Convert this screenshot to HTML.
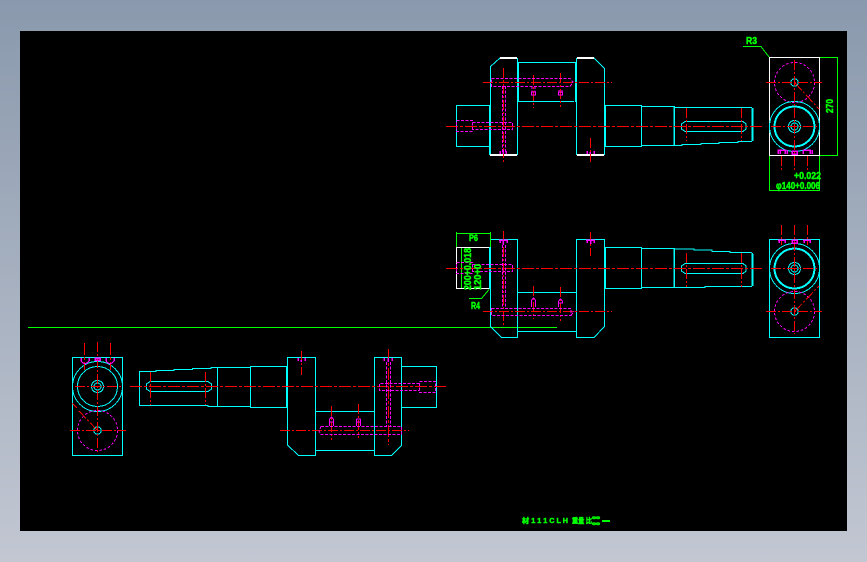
<!DOCTYPE html>
<html><head><meta charset="utf-8"><style>
html,body{margin:0;padding:0;width:867px;height:562px;overflow:hidden;background:linear-gradient(#8a99ad,#c2c7d2)}
svg{position:absolute;left:0;top:0;shape-rendering:crispEdges}
.c{stroke:#0ff;fill:none;stroke-width:1}
.ct{stroke:#0ff;fill:none;stroke-width:2}
.r{stroke:#f00;fill:none;stroke-width:1;stroke-dasharray:10 2 2 2}
.rt{stroke:#f00;fill:none;stroke-width:1;stroke-dasharray:12 2 3 2}
.m{stroke:#f0f;fill:none;stroke-width:1;stroke-dasharray:3 1.5}
.mc{stroke:#f0f;fill:none;stroke-width:1;stroke-dasharray:2.5 2}
.ms{stroke:#f0f;fill:none;stroke-width:1}
.mb{stroke:#f0f;fill:none;stroke-width:1.5}
.g{stroke:#0f0;fill:none;stroke-width:1}
.w{stroke:#fff;fill:none;stroke-width:1}
.wt{stroke:#fff;fill:none;stroke-width:2}
text{fill:#0f0;stroke:#0f0;stroke-width:.5;font-family:"Liberation Sans","Noto Sans CJK SC",sans-serif;font-weight:bold;shape-rendering:auto}
</style></head><body>
<svg width="867" height="562" viewBox="0 0 867 562" xmlns="http://www.w3.org/2000/svg">
<rect x="20" y="31" width="827" height="500" fill="#000"/>

<path class="g" d="M28 327.500H557"/>

<!-- ============ TOP ROW ============ -->
<path class="c" d="M490.500 155V66.500L500 58M517.500 58V155M576.500 58V155M594 58L604.500 68.500V155"/>
<path class="ct" d="M490 105V155M518 62V102M576 62V102M605 105V147"/>
<path class="wt" d="M500 58H517M577 58H594M490 155H517M577 155H604"/>
<path class="c" d="M518 62.500H575M518 101.500H574"/>
<path class="c" d="M489 105.500H456.500V146.500H489"/>
<path class="c" d="M605 105.500H641.500V146.500H605M641.500 106.500H674V145.500H641.500"/>
<path class="c" d="M674.500 106V145.500M674 107.500H752M674 145.500H682V144.500H701V143.500H719V142.500H738V141.500H752"/>
<path class="ct" d="M752.500 108V141"/>
<path class="c" d="M685 121.500H743L746 124V129L743 131.500H685L681.500 129V124Z"/>
<path class="rt" d="M446 126.500H762"/>
<path class="r" d="M483 82.500H612"/>
<path class="r" d="M503.500 68V163M533.500 75V108M560.500 73V107M590.500 138V162M686.500 108V141M741.500 108V141"/>
<path class="m" d="M491.500 78.500H570L573 82L570 86.500H491.500ZM502.500 86V153M505.500 86V153M472.500 122.500H512.500V129.500H472.500M456.500 120.500H472.500V131.500H456.500ZM532 86V92M535 86V92M559 90V95M562 90V95"/>
<path class="ms" d="M531.500 92H535.500V95H531.500ZM558.500 92H562.500V95H558.500Z"/>
<path class="mb" d="M500 154V151M503 154V150M506 154V151M587 154V151M594 154V151M590 154V152"/>

<rect class="w" x="769.500" y="57.500" width="50" height="98"/>
<path class="g" d="M820 57.500H837.500V155.500H820M769.500 156V190.500H819.500V156"/>
<circle class="mc" cx="794.500" cy="82.500" r="20"/>
<circle class="c" cx="794.500" cy="82.500" r="3.700"/>
<circle class="c" cx="794.500" cy="126.500" r="25"/>
<circle class="ct" cx="794.500" cy="126.500" r="20"/>
<circle class="c" cx="794.500" cy="126.500" r="6"/>
<circle class="c" cx="794.500" cy="126.500" r="3.500"/>
<path class="r" d="M766 82.500H822M771 126.500H817"/>
<path class="r" d="M794.500 60V172M781.500 156V172M807.500 156V172"/>
<path class="r" d="M795 83L819 109"/>
<path class="mb" d="M778 154V150H785V154M787 154V150M780 150V154M792 154H797V151H792ZM803 154V150H810V154M812 154V150"/>
<path class="g" d="M743 46.500H761L769 57"/>
<text x="746" y="44" font-size="10" textLength="11" lengthAdjust="spacingAndGlyphs">R3</text>
<text transform="translate(833,113) rotate(-90)" font-size="10" textLength="14" lengthAdjust="spacingAndGlyphs">270</text>
<text x="794" y="179" font-size="10" textLength="27" lengthAdjust="spacingAndGlyphs">+0.022</text>
<text x="776" y="189" font-size="10" textLength="44" lengthAdjust="spacingAndGlyphs">&#966;140+0.006</text>

<!-- ============ MIDDLE ROW ============ -->
<path class="c" d="M490.500 239.500V326.500L501.500 337.500H517.500V239.500H490.500M576.500 239.500H604.500V326.500L594 337.500H576.500Z"/>
<path class="c" d="M517.500 292.500H576M517.500 331.500H576"/>
<path class="c" d="M605 247.500H641.500V288.500H605M641.500 248.500H674V287.500H641.500"/>
<path class="c" d="M674.500 248V287.500M674 249H694V250H712V251.500H730V252.500H751L753 254M674 287.500H705V286.500H752"/>
<path class="ct" d="M605 247V288M752.500 254V286"/>
<path class="c" d="M685 263.500H743L746 266V271L743 273.500H685L681.500 271V266Z"/>
<path class="w" d="M490 247.500H456.500V288.500H490"/>
<path class="g" d="M456.500 247V233.500H490.500V247M456.500 232V236M490.500 232V236M461.500 248V288"/>
<path class="ct" d="M490 247V289"/>
<path class="rt" d="M446 268.500H762"/>
<path class="r" d="M483 311.500H612"/>
<path class="r" d="M503.500 231V326M533.500 286V319M560.500 287V321M590.500 232V256M686.500 253V287M741.500 253V287"/>
<path class="m" d="M491.500 308.500H571V315.500H491.500ZM571 315.500L574 311M502.500 245V308M505.500 245V308M472.500 264.500H512.500V271.500H472.500M456.500 262.500H472.500V273.500H456.500Z"/>
<path class="ms" d="M531.500 300V307M535.500 300V307M531.500 300L533.500 298L535.500 300M558.500 301V307M562.500 301V303H558.500M558.500 301L560.500 299L562.500 301"/>
<path class="mb" d="M499 240H508M500 240V243M503 240V245M507 240V243M586 240H595M587 240V243M590.500 240V244M594 240V243"/>
<path class="g" d="M469 298.500H481.500L489 289.500"/>
<text x="469" y="241" font-size="9" textLength="9" lengthAdjust="spacingAndGlyphs">P6</text>
<text transform="translate(471,290) rotate(-90)" font-size="10" textLength="42" lengthAdjust="spacingAndGlyphs">200+0.018</text>
<text transform="translate(481,290) rotate(-90)" font-size="10" textLength="26" lengthAdjust="spacingAndGlyphs">120+0</text>
<text x="471" y="309" font-size="10" textLength="9" lengthAdjust="spacingAndGlyphs">R4</text>

<rect class="c" x="769.500" y="239.500" width="50" height="98"/>
<circle class="c" cx="794.500" cy="268.500" r="25"/>
<circle class="ct" cx="794.500" cy="268.500" r="20"/>
<circle class="c" cx="794.500" cy="268.500" r="6"/>
<circle class="c" cx="794.500" cy="268.500" r="3.500"/>
<circle class="mc" cx="794.500" cy="311.500" r="20"/>
<circle class="c" cx="794.500" cy="311.500" r="3.700"/>
<path class="r" d="M771 268.500H817M766 311.500H822"/>
<path class="r" d="M794.500 225V334M781.500 225V245M807.500 225V245"/>
<path class="r" d="M795 311L819 286"/>
<path class="mb" d="M778 240H786M779 240V243M785 240V243M792 240H797V243H792ZM803 240H811M804 240V243M810 240V243"/>

<!-- ============ BOTTOM ROW ============ -->
<rect class="c" x="72.500" y="357.500" width="50" height="98"/>
<circle class="c" cx="97.500" cy="386.500" r="25"/>
<circle class="c" cx="97.500" cy="386.500" r="20"/>
<circle class="c" cx="97.500" cy="386.500" r="6"/>
<circle class="c" cx="97.500" cy="386.500" r="3.500"/>
<circle class="mc" cx="97.500" cy="430.500" r="20"/>
<circle class="c" cx="97.500" cy="430.500" r="3.700"/>
<path class="r" d="M75 386.500H122M70 430.500H126"/>
<path class="r" d="M97.500 342V453"/>
<path class="rt" d="M84.500 343V370M110.500 343V370"/>
<path class="r" d="M72.500 403.500L77 408M79 411L97.500 430.500"/>
<path class="mb" d="M81 358V361M89 358V361M95 358H100V360H95ZM106 358V361M114 358V361"/>
<path class="ms" d="M81 361Q85 366 89 361M106 361Q110 366 114 361"/>

<path class="c" d="M139.500 371.500V405.500H208V406.500H217.500V367.500H211V368.500H192.500V369.500H174V370.500H156V371.500Z"/>
<path class="c" d="M217.500 367.500H250.500V406.500H217.500M250.500 366.500H286.500V407.500H250.500Z"/>
<path class="c" d="M150 381.500H208L211.500 384V389L208 391.500H150L146.500 389V384Z"/>
<path class="c" d="M287.500 445V357.500H315.500V455.500H298.500L287.500 445M374.500 455.500V357.500H401.500V445.500L391.500 455.500Z"/>
<path class="ct" d="M287 366V408"/>
<path class="c" d="M316 411.500H374M316 450.500H374"/>
<path class="c" d="M402 366.500H436.500V407.500H402"/>
<path class="rt" d="M130 386.500H446"/>
<path class="r" d="M280 430.500H409"/>
<path class="r" d="M150.500 372V405M205.500 372V405M301.500 351V375M331.500 406V440M358.500 404V438"/>
<path class="rt" d="M388.500 349V445"/>
<path class="m" d="M321 426.500H401.500V434.500H321L319 431ZM386.500 362V426M390.500 362V426M419.500 383.500H379.500V390.500H419.500M419.500 381.500H435.500V392.500H419.500Z"/>
<path class="ms" d="M329.500 419V426M333.500 419V426M329.500 419L331.500 417L333.500 419M329.500 422H333.500M356.500 419V426M360.500 419V426M356.500 419H360.500M356.500 422H360.500"/>
<path class="mb" d="M298 358V361M305 358V361M301 360V362M384 358V361M392 358V361M388 358V362"/>

<!-- title text -->
<text x="522" y="523" font-size="7" textLength="46" lengthAdjust="spacingAndGlyphs">材 1 1 1 C L H</text>
<text x="572" y="523" font-size="7" textLength="20" lengthAdjust="spacingAndGlyphs">重量 比</text>
<text x="592" y="519" font-size="4" textLength="8" lengthAdjust="spacingAndGlyphs">00</text>
<text x="592" y="525" font-size="4" textLength="8" lengthAdjust="spacingAndGlyphs">00</text>
<path d="M602 521H610" stroke="#0f0" stroke-width="2"/>
</svg>
</body></html>
